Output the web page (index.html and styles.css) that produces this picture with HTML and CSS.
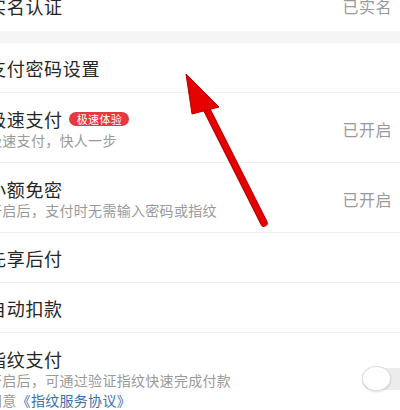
FILE: index.html
```html
<!DOCTYPE html>
<html>
<head>
<meta charset="utf-8">
<link rel="stylesheet" href="styles.css">
</head>
<body>
<div class="page">
  <div class="row row-top">
    <div class="main"><div class="title">实名认证</div></div>
    <div class="value">已实名</div>
  </div>
  <div class="band"></div>
  <div class="row">
    <div class="main"><div class="title">支付密码设置</div></div>
  </div>
  <div class="row tall">
    <div class="main">
      <div class="title">极速支付<span class="badge">极速体验</span></div>
      <div class="sub">极速支付，快人一步</div>
    </div>
    <div class="value">已开启</div>
  </div>
  <div class="row tall">
    <div class="main">
      <div class="title">小额免密</div>
      <div class="sub">开启后，支付时无需输入密码或指纹</div>
    </div>
    <div class="value">已开启</div>
  </div>
  <div class="row">
    <div class="main"><div class="title">先享后付</div></div>
  </div>
  <div class="row">
    <div class="main"><div class="title">自动扣款</div></div>
  </div>
  <div class="row tall last">
    <div class="main">
      <div class="title">指纹支付</div>
      <div class="sub">开启后，可通过验证指纹快速完成付款</div>
      <div class="sub">同意<span class="link">《指纹服务协议》</span></div>
    </div>
    <div class="toggle"><div class="knob"></div></div>
  </div>

  <svg class="arrow" width="400" height="410" viewBox="0 0 400 410">
    <line x1="206" y1="108" x2="264" y2="223" stroke="#b80000" stroke-width="7.5" stroke-linecap="round"/>
    <line x1="206" y1="108" x2="264" y2="223" stroke="#e60000" stroke-width="5.5" stroke-linecap="round"/>
    <polygon points="186,74 219,107 192,114" fill="#e60000" stroke="#b80000" stroke-width="1" stroke-linejoin="round"/>
  </svg>
</div>
</body>
</html>
```

FILE: styles.css
```css
html, body {
  margin: 0;
  padding: 0;
  background: #ffffff;
}
body {
  width: 400px;
  height: 410px;
  overflow: hidden;
  font-family: "Noto Sans CJK SC", "Noto Sans", sans-serif;
}
.page {
  position: relative;
  width: 400px;
  height: 410px;
  overflow: hidden;
}
.row {
  display: flex;
  align-items: center;
  justify-content: space-between;
  min-height: 49px;
  padding: 0 8px 0 0;
  border-bottom: 1px solid #efefef;
  box-sizing: content-box;
}
.row-top {
  margin-top: -19px;
  min-height: 50px;
  border-bottom: none;
}
.row.tall {
  min-height: 0;
  padding: 15px 8px 12px 0;
}
.row.last {
  border-bottom: none;
}
.main {
  margin-left: -12px;
  display: flex;
  flex-direction: column;
}
.title {
  font-size: 18px;
  line-height: 22px;
  letter-spacing: 0.7px;
  color: #262626;
  display: flex;
  align-items: center;
  white-space: nowrap;
}
.sub {
  font-size: 14px;
  line-height: 20px;
  letter-spacing: 0.3px;
  color: #9a9a9a;
  white-space: nowrap;
}
.link {
  color: #3b6fb0;
}
.badge {
  display: inline-block;
  margin-left: 6px;
  padding: 0 7px 0 8px;
  height: 14px;
  line-height: 14px;
  font-size: 11px;
  letter-spacing: 0.3px;
  color: #ffffff;
  background: #e7383f;
  border-radius: 7px;
}
.value {
  font-size: 16px;
  letter-spacing: 0.5px;
  color: #9a9a9a;
  white-space: nowrap;
}
.band {
  height: 12px;
  background: #f5f5f5;
}
.toggle {
  width: 52px;
  height: 22px;
  margin-right: -22px;
  border-radius: 11px;
  background: #ececec;
  position: relative;
  flex: none;
}
.knob {
  position: absolute;
  left: 0;
  top: -2px;
  width: 29px;
  height: 25px;
  border-radius: 50%;
  background: #ffffff;
  border: 1px solid #dddddd;
  box-shadow: 0 1px 2px rgba(0,0,0,0.15);
  box-sizing: border-box;
}
.arrow {
  position: absolute;
  left: 0;
  top: 0;
  pointer-events: none;
}
```
